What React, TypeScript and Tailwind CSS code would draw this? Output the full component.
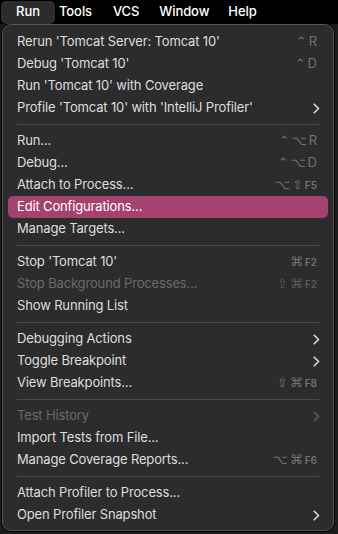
import React from "react";

type Item =
  | { type: "sep" }
  | { type: "item"; label: string; sc?: string; key?: string; sub?: boolean; disabled?: boolean; active?: boolean };

const items: Item[] = [
  { type: "item", label: "Rerun 'Tomcat Server: Tomcat 10'", sc: "⌃", key: "R" },
  { type: "item", label: "Debug 'Tomcat 10'", sc: "⌃", key: "D" },
  { type: "item", label: "Run 'Tomcat 10' with Coverage" },
  { type: "item", label: "Profile 'Tomcat 10' with 'IntelliJ Profiler'", sub: true },
  { type: "sep" },
  { type: "item", label: "Run...", sc: "⌃⌥", key: "R" },
  { type: "item", label: "Debug...", sc: "⌃⌥", key: "D" },
  { type: "item", label: "Attach to Process...", sc: "⌥⇧", key: "F5" },
  { type: "item", label: "Edit Configurations...", active: true },
  { type: "item", label: "Manage Targets..." },
  { type: "sep" },
  { type: "item", label: "Stop 'Tomcat 10'", sc: "⌘", key: "F2" },
  { type: "item", label: "Stop Background Processes...", sc: "⇧⌘", key: "F2", disabled: true },
  { type: "item", label: "Show Running List" },
  { type: "sep" },
  { type: "item", label: "Debugging Actions", sub: true },
  { type: "item", label: "Toggle Breakpoint", sub: true },
  { type: "item", label: "View Breakpoints...", sc: "⇧⌘", key: "F8" },
  { type: "sep" },
  { type: "item", label: "Test History", sub: true, disabled: true },
  { type: "item", label: "Import Tests from File..." },
  { type: "item", label: "Manage Coverage Reports...", sc: "⌥⌘", key: "F6" },
  { type: "sep" },
  { type: "item", label: "Attach Profiler to Process..." },
  { type: "item", label: "Open Profiler Snapshot", sub: true },
];

function Chevron({ dim }: { dim?: boolean }) {
  return (
    <svg width="7" height="11" viewBox="0 0 7 11" className={dim ? "text-[#5c5c5c]" : "text-[#d8d8d8]"}>
      <path d="M1.2 1.2 L5.6 5.5 L1.2 9.8" fill="none" stroke="currentColor" strokeWidth="1.6" strokeLinecap="round" strokeLinejoin="round" />
    </svg>
  );
}

export default function App() {
  return (
    <div className="w-[338px] h-[534px] bg-[#1c1c1c] overflow-hidden" style={{ fontFamily: "Inter, 'Noto Sans', sans-serif" }}>
      <div className="h-[24px] bg-black flex items-center text-[13px] font-medium text-white tracking-[-0.1px]">
        <div className="h-[23px] w-[54px] ml-[1px] rounded-[5px] bg-[#2c2c2c] flex items-center justify-center">Run</div>
        <div className="ml-[4px]">Tools</div>
        <div className="ml-[21px]">VCS</div>
        <div className="ml-[20px]">Window</div>
        <div className="ml-[19px]">Help</div>
      </div>
      <div className="ml-[2px] w-[332px] h-[507px] rounded-[9px] bg-[#2c2c2d] border border-[#555557] shadow-[0_0_0_1px_#000] py-[6px] px-[5px] text-[13px] text-[#dedede]">
        {items.map((it, i) =>
          it.type === "sep" ? (
            <div key={i} className="h-[11px] flex items-center px-[9px]">
              <div className="h-px w-full bg-[#4a4a4b]" />
            </div>
          ) : (
            <div
              key={i}
              className={`h-[22px] flex items-center pl-[9px] pr-[8px] rounded-[5px] ${it.active ? "bg-[#a3416f] text-white" : ""} ${it.disabled ? "text-[#6a6a6a]" : ""}`}
            >
              <span className="flex-1 whitespace-nowrap tracking-[-0.15px]">{it.label}</span>
              {it.sc && (
                <span className={`flex items-center mr-[3px] ${it.disabled ? "text-[#5a5a5a]" : "text-[#727272]"}`}>
                  <span className="text-[13px] tracking-[2px]" style={{ fontFamily: "'DejaVu Sans', sans-serif" }}>{it.sc}</span>
                  <span className={it.key && it.key.length > 1 ? "text-[10px] font-semibold" : "text-[13px]"}>{it.key}</span>
                </span>
              )}
              {it.sub && <Chevron dim={it.disabled} />}
            </div>
          )
        )}
      </div>
    </div>
  );
}
